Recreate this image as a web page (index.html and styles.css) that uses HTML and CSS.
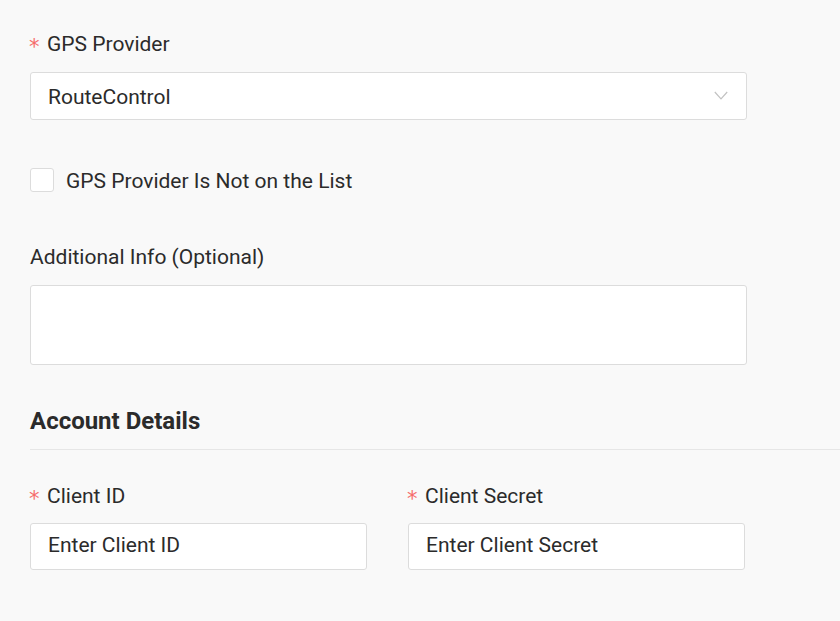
FILE: index.html
```html
<!DOCTYPE html>
<html>
<head>
<meta charset="utf-8">
<link rel="stylesheet" href="styles.css">
</head>
<body>
<div class="form">
  <div class="field">
    <div class="label"><span class="req">*</span>GPS Provider</div>
    <div class="select">
      <span class="value">RouteControl</span>
      <svg class="chev" width="14" height="9" viewBox="0 0 14 9"><path d="M0.8 1 L7 7.8 L13.2 1" fill="none" stroke="#c2c2c2" stroke-width="1.2"/></svg>
    </div>
  </div>

  <label class="check">
    <span class="box"></span>
    <span class="check-text">GPS Provider Is Not on the List</span>
  </label>

  <div class="field info">
    <div class="label">Additional Info (Optional)</div>
    <div class="textarea"></div>
  </div>

  <h2 class="section">Account Details</h2>

  <div class="cols">
    <div class="field">
      <div class="label"><span class="req">*</span>Client ID</div>
      <div class="input">Enter Client ID</div>
    </div>
    <div class="field">
      <div class="label"><span class="req">*</span>Client Secret</div>
      <div class="input">Enter Client Secret</div>
    </div>
  </div>
</div>
</body>
</html>
```

FILE: styles.css
```css
html, body {
  margin: 0;
  padding: 0;
  background: #f9f9f9;
}
body {
  font-family: Roboto, "Liberation Sans", sans-serif;
  color: #2b2b2b;
  font-size: 21px;
}
.form {
  padding: 32px 0 0 30px;
}
.field {
  display: flex;
  flex-direction: column;
}
.label {
  line-height: 24px;
  height: 24px;
  margin-bottom: 16px;
  display: flex;
  align-items: center;
}
.req {
  color: #f66b6b;
  font-size: 21px;
  width: 17px;
  font-family: "DejaVu Sans", sans-serif;
  position: relative;
  top: 3px;
  left: -1px;
}
.select, .input, .textarea {
  background: #fff;
  border: 1px solid #dcdcdc;
  border-radius: 3px;
  box-sizing: border-box;
}
.select {
  width: 717px;
  height: 48px;
  display: flex;
  align-items: center;
  justify-content: space-between;
  padding: 0 18px 0 17px;
}
.value {
  padding-top: 2px;
}
.chev {
  margin-top: -2px;
}
.check {
  display: flex;
  align-items: center;
  margin-top: 48px;
  height: 24px;
}
.check-text {
  padding-top: 2px;
}
.box {
  width: 24px;
  height: 24px;
  box-sizing: border-box;
  border: 1px solid #dcdcdc;
  border-radius: 3px;
  background: #fff;
  margin-right: 12px;
}
.info {
  margin-top: 53px;
}
.textarea {
  width: 717px;
  height: 80px;
}
.section {
  margin: 42px 0 0 0;
  font-size: 24px;
  font-weight: 700;
  line-height: 28px;
  padding-bottom: 14px;
  border-bottom: 1px solid #e6e6e6;
}
.cols {
  display: grid;
  grid-template-columns: 337px 337px;
  column-gap: 41px;
  margin-top: 34px;
}
.cols .label {
  margin-bottom: 15px;
}
.input {
  height: 47px;
  display: flex;
  align-items: center;
  padding: 0 0 4px 17px;
}
```
